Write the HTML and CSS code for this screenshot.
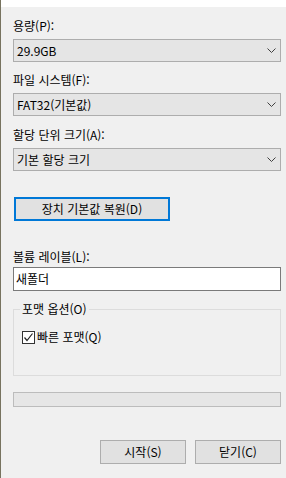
FILE: index.html
```html
<!DOCTYPE html>
<html lang="ko">
<head>
    <meta charset="UTF-8">
    <meta name="viewport" content="width=device-width, initial-scale=1.0">
    <title>포맷</title>
    <link rel="stylesheet" href="styles.css">
</head>
<body>

    <div class="top-strip"></div>

    <div class="dialog">

        <div class="field">
            <label>용량(P):</label>
            <div class="combo">
                <span>29.9GB</span>
                <svg class="chevron" width="9" height="5" viewBox="0 0 9 5"><polyline points="0.5,0.5 4.5,4.5 8.5,0.5" fill="none" stroke="#404040" stroke-width="1"/></svg>
            </div>
        </div>

        <div class="field">
            <label>파일 시스템(F):</label>
            <div class="combo">
                <span>FAT32(기본값)</span>
                <svg class="chevron" width="9" height="5" viewBox="0 0 9 5"><polyline points="0.5,0.5 4.5,4.5 8.5,0.5" fill="none" stroke="#404040" stroke-width="1"/></svg>
            </div>
        </div>

        <div class="field field-wide">
            <label>할당 단위 크기(A):</label>
            <div class="combo">
                <span>기본 할당 크기</span>
                <svg class="chevron" width="9" height="5" viewBox="0 0 9 5"><polyline points="0.5,0.5 4.5,4.5 8.5,0.5" fill="none" stroke="#404040" stroke-width="1"/></svg>
            </div>
        </div>

        <button class="btn btn-default">장치 기본값 복원(D)</button>

        <div class="field field-label">
            <label>볼륨 레이블(L):</label>
            <div class="textbox">새폴더</div>
        </div>

        <fieldset class="group">
            <legend>포맷 옵션(O)</legend>
            <div class="check-row">
                <span class="checkbox">
                    <svg width="11" height="11" viewBox="0 0 11 11"><polyline points="1.5,5.5 4,8.5 9.5,1.5" fill="none" stroke="#222" stroke-width="1.2"/></svg>
                </span>
                <span>빠른 포맷(Q)</span>
            </div>
        </fieldset>

        <div class="progress"></div>

        <div class="actions">
            <button class="btn">시작(S)</button>
            <button class="btn">닫기(C)</button>
        </div>

    </div>

</body>
</html>
```

FILE: styles.css
```css
body {
    font-family: 'Noto Sans CJK KR', 'Noto Sans', sans-serif;
    font-size: 12px;
    color: #000;
    background-color: #f0f0f0;
    margin: 0;
    padding: 0;
    border-left: 1px solid #77735f;
    height: 478px;
    box-sizing: border-box;
}

.top-strip {
    height: 7px;
    background-color: #fff;
}

.dialog {
    padding: 11px 5px 0 12px;
    display: flex;
    flex-direction: column;
}

.field label {
    display: block;
    line-height: 16px;
}

.field + .field {
    margin-top: 10px;
}

.field-wide {
    margin-top: 11px !important;
}

.combo {
    margin-top: 5px;
    height: 23px;
    box-sizing: border-box;
    border: 1px solid #adadad;
    background-color: #e5e5e5;
    display: flex;
    justify-content: space-between;
    align-items: center;
    padding: 0 4px 0 3px;
    line-height: 16px;
}

.btn {
    font-family: inherit;
    font-size: 12px;
    color: #000;
    height: 24px;
    box-sizing: border-box;
    border: 1px solid #adadad;
    background-color: #e1e1e1;
    padding: 0;
    line-height: 16px;
}

.btn-default {
    margin-top: 26px;
    margin-left: 1px;
    width: 156px;
    border: 2px solid #0078d7;
}

.field-label {
    margin-top: 28px;
}

.textbox {
    margin-top: 2px;
    height: 24px;
    box-sizing: border-box;
    border: 1px solid #7a7a7a;
    background-color: #fff;
    padding: 0 2px;
    line-height: 22px;
}

.group {
    margin: 10px 0 0 0;
    height: 75px;
    box-sizing: border-box;
    border: 1px solid #dcdcdc;
    padding: 12px 0 0 8px;
    min-width: 0;
}

.group legend {
    padding: 0 2px;
    margin-left: -2px;
    line-height: 16px;
}

.check-row {
    display: flex;
    align-items: center;
    gap: 2px;
    line-height: 16px;
}

.checkbox {
    width: 13px;
    height: 13px;
    box-sizing: border-box;
    border: 1px solid #333;
    background-color: #fff;
    display: flex;
    align-items: center;
    justify-content: center;
}

.progress {
    margin-top: 16px;
    height: 15px;
    box-sizing: border-box;
    border: 1px solid #bcbcbc;
    background-color: #e6e6e6;
}

.actions {
    margin-top: 33px;
    display: flex;
    justify-content: flex-end;
    gap: 9px;
}

.actions .btn {
    width: 86px;
}
```
